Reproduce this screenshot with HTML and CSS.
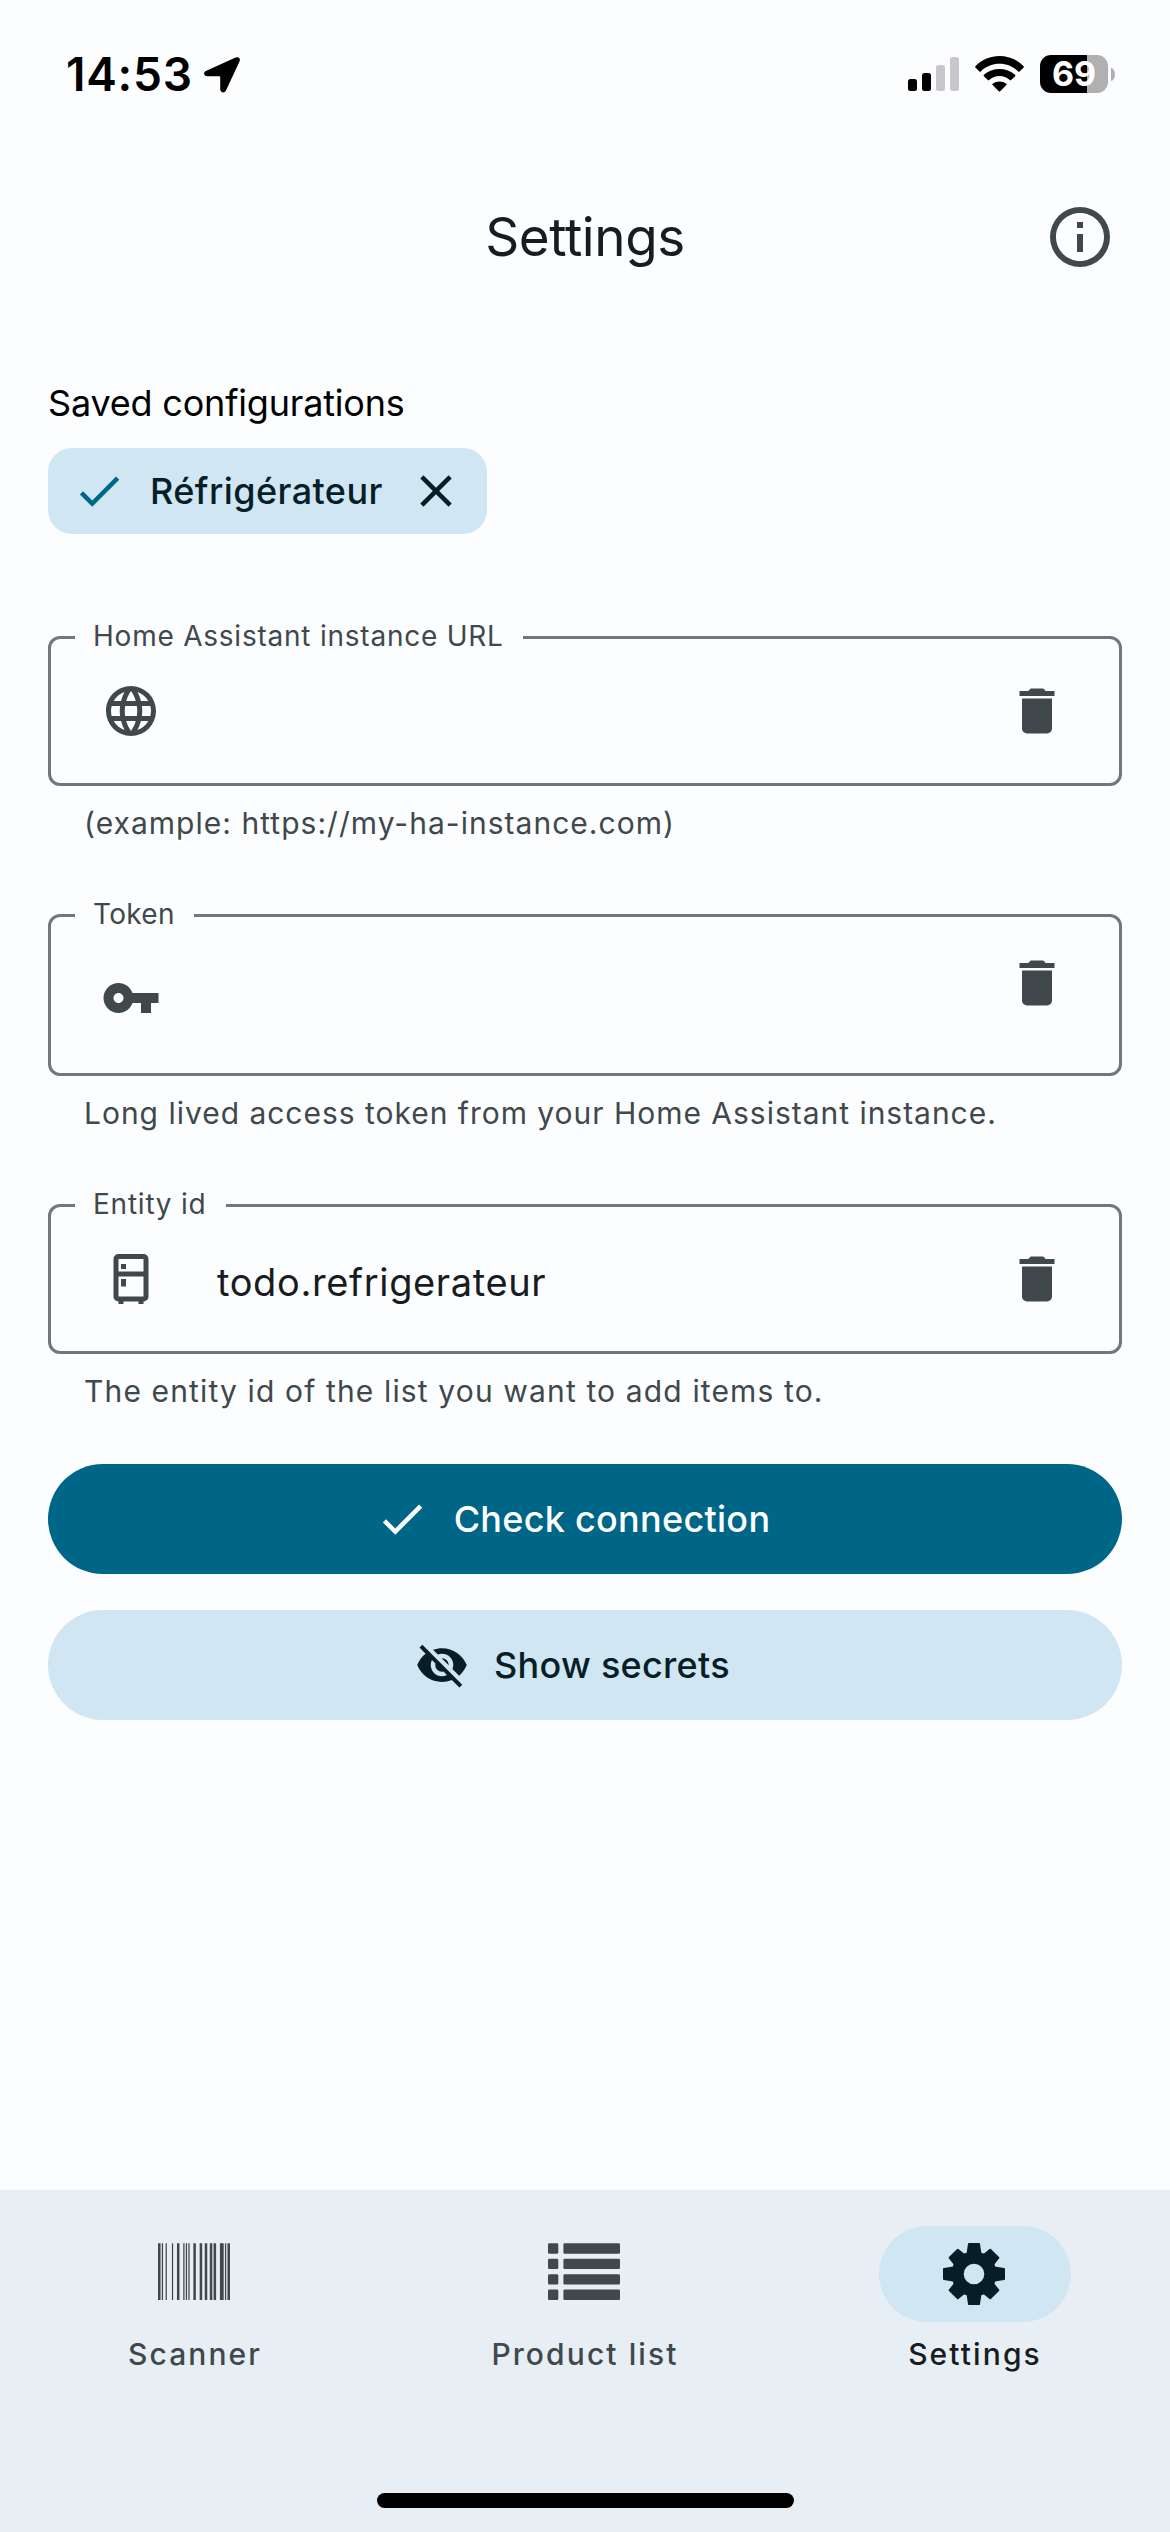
FILE: index.html
```html
<!DOCTYPE html>
<html lang="en">
<head>
<meta charset="utf-8">
<title>Settings</title>
<link rel="stylesheet" href="styles.css">
</head>
<body>
<svg class="defs" width="0" height="0" aria-hidden="true">
  <symbol id="check" viewBox="0 0 24 24"><path d="M21,7L9,19L3.5,13.5L4.91,12.09L9,16.17L19.59,5.59L21,7Z"/></symbol>
  <symbol id="delete" viewBox="0 0 24 24"><path d="M19,4H15.5L14.5,3H9.5L8.5,4H5V6H19M6,19A2,2 0 0,0 8,21H16A2,2 0 0,0 18,19V7H6V19Z"/></symbol>
</svg>

<header class="status">
  <span class="status__time">14:53</span>
  <svg class="status__arrow" width="36" height="36" viewBox="0 0 36 36"><path d="M1.8 14L31.6 .6Q33.6 -.2 35 .8Q36.3 2 35.6 4.2L22 33.5Q20.8 35.8 18.4 35.5Q16.2 35 16.2 32.3V20.3Q16.2 19.3 15.2 19.3H3.4Q.6 19.3 .1 17.2Q-.2 15 1.8 14Z"/></svg>
  <div class="status__right">
    <svg width="51" height="34" viewBox="0 0 51 34">
      <rect y="22" width="9" height="12" rx="2.5"/><rect x="14" y="16" width="9" height="18" rx="2.5"/>
      <g fill="#c8c8cc"><rect x="28" y="8" width="9" height="26" rx="2.5"/><rect x="42" width="9" height="34" rx="2.5"/></g>
    </svg>
    <svg width="49" height="36" viewBox="0 0 49 36">
      <path d="M.4 11.6Q-.2 10.8 .4 10.2C13.6 -3.4 35.4 -3.4 48.6 10.2Q49.2 10.8 48.6 11.6L44.6 15.5Q43.9 16.1 43.2 15.5C32.8 5.3 16.2 5.3 5.8 15.5Q5.1 16.1 4.4 15.5Z"/>
      <path d="M8.9 20.2Q8.2 19.5 8.9 18.8C17.6 10.9 31.4 10.9 40.1 18.8Q40.8 19.5 40.1 20.2L36.2 24.1Q35.5 24.7 34.8 24.1C28.9 18.6 20.1 18.6 14.2 24.1Q13.5 24.7 12.8 24.1Z"/>
      <path d="M17.6 29Q16.9 28.3 17.7 27.7C21.6 24.6 27.4 24.6 31.3 27.7Q32.1 28.3 31.4 29L25.2 35.3Q24.5 35.9 23.8 35.3Z"/>
    </svg>
    <div class="battery"><span class="battery__body">69</span><span class="battery__cap"></span></div>
  </div>
</header>

<div class="appbar">
  <h1 class="appbar__title">Settings</h1>
  <svg class="appbar__info" width="72" height="72" viewBox="0 0 24 24"><path d="M11,9H13V7H11M12,20C7.59,20 4,16.41 4,12C4,7.59 7.59,4 12,4C16.41,4 20,7.59 20,12C20,16.41 16.41,20 12,20M12,2A10,10 0 0,0 2,12A10,10 0 0,0 12,22A10,10 0 0,0 22,12A10,10 0 0,0 12,2M11,17H13V11H11V17Z"/></svg>
</div>

<main class="content">
  <h2 class="saved">Saved configurations</h2>
  <div class="chip">
    <svg class="chip__check" width="54" height="54"><use href="#check"/></svg>
    <span class="chip__label">Réfrigérateur</span>
    <svg width="54" height="54" viewBox="0 0 24 24"><path d="M19,6.41L17.59,5L12,10.59L6.41,5L5,6.41L10.59,12L5,17.59L6.41,19L12,13.41L17.59,19L19,17.59L13.41,12L19,6.41Z"/></svg>
  </div>

  <fieldset class="field">
    <legend class="field__label">Home Assistant instance URL</legend>
    <svg class="icon" width="60" height="60" viewBox="0 0 24 24"><path d="M16.36,14C16.44,13.34 16.5,12.68 16.5,12C16.5,11.32 16.44,10.66 16.36,10H19.74C19.9,10.64 20,11.31 20,12C20,12.69 19.9,13.36 19.74,14M14.59,19.56C15.19,18.45 15.65,17.25 15.97,16H18.92C17.96,17.65 16.43,18.93 14.59,19.56M14.34,14H9.66C9.56,13.34 9.5,12.68 9.5,12C9.5,11.32 9.56,10.65 9.66,10H14.34C14.43,10.65 14.5,11.32 14.5,12C14.5,12.68 14.43,13.34 14.34,14M12,19.96C11.17,18.76 10.5,17.43 10.09,16H13.91C13.5,17.43 12.83,18.76 12,19.96M8,8H5.08C6.03,6.34 7.57,5.06 9.4,4.44C8.8,5.55 8.35,6.75 8,8M5.08,16H8C8.35,17.25 8.8,18.45 9.4,19.56C7.57,18.93 6.03,17.65 5.08,16M4.26,14C4.1,13.36 4,12.69 4,12C4,11.31 4.1,10.64 4.26,10H7.64C7.56,10.66 7.5,11.32 7.5,12C7.5,12.68 7.56,13.34 7.64,14M12,4.03C12.83,5.23 13.5,6.57 13.91,8H10.09C10.5,6.57 11.17,5.23 12,4.03M18.92,8H15.97C15.65,6.75 15.19,5.55 14.59,4.44C16.43,5.07 17.96,6.34 18.92,8M12,2C6.47,2 2,6.5 2,12A10,10 0 0,0 12,22A10,10 0 0,0 22,12A10,10 0 0,0 12,2Z"/></svg>
    <span class="field__value"></span>
    <svg class="icon" width="60" height="60"><use href="#delete"/></svg>
  </fieldset>
  <p class="helper">(example: https://my-ha-instance.com)</p>

  <fieldset class="field field--token">
    <legend class="field__label">Token</legend>
    <svg class="icon icon--key" width="60" height="60" viewBox="0 0 24 24"><path d="M7 14C5.9 14 5 13.1 5 12S5.9 10 7 10 9 10.9 9 12 8.1 14 7 14M12.6 10C11.8 7.7 9.6 6 7 6C3.7 6 1 8.7 1 12S3.7 18 7 18C9.6 18 11.8 16.3 12.6 14H16V18H20V14H23V10H12.6Z"/></svg>
    <span class="field__value"></span>
    <svg class="icon" width="60" height="60"><use href="#delete"/></svg>
  </fieldset>
  <p class="helper helper--token">Long lived access token from your Home Assistant instance.</p>

  <fieldset class="field">
    <legend class="field__label">Entity id</legend>
    <svg class="icon" width="60" height="60" viewBox="0 0 24 24"><path d="M9,21V22H7V21A2,2 0 0,1 5,19V4A2,2 0 0,1 7,2H17A2,2 0 0,1 19,4V19A2,2 0 0,1 17,21V22H15V21H9M7,4V9H17V4H7M7,19H17V11H7V19M8,12H10V15H8V12M8,6H10V8H8V6Z"/></svg>
    <span class="field__value">todo.refrigerateur</span>
    <svg class="icon" width="60" height="60"><use href="#delete"/></svg>
  </fieldset>
  <p class="helper helper--entity">The entity id of the list you want to add items to.</p>

  <div class="actions">
    <button class="button button--primary"><svg width="54" height="54"><use href="#check"/></svg>Check connection</button>
    <button class="button button--tonal"><svg width="54" height="54" viewBox="0 0 24 24"><path d="M11.83,9L15,12.16C15,12.11 15,12.05 15,12A3,3 0 0,0 12,9C11.94,9 11.89,9 11.83,9M7.53,9.8L9.08,11.35C9.03,11.56 9,11.77 9,12A3,3 0 0,0 12,15C12.22,15 12.44,14.97 12.65,14.92L14.2,16.47C13.53,16.8 12.79,17 12,17A5,5 0 0,1 7,12C7,11.21 7.2,10.47 7.53,9.8M2,4.27L4.28,6.55L4.73,7C3.08,8.3 1.78,10 1,12C2.73,16.39 7,19.5 12,19.5C13.55,19.5 15.03,19.2 16.38,18.66L16.81,19.08L19.73,22L21,20.73L3.27,3M12,7A5,5 0 0,1 17,12C17,12.64 16.87,13.26 16.64,13.82L19.57,16.75C21.07,15.5 22.27,13.86 23,12C21.27,7.61 17,4.5 12,4.5C10.6,4.5 9.26,4.75 8,5.2L10.17,7.35C10.74,7.13 11.35,7 12,7Z"/></svg>Show secrets</button>
  </div>
</main>

<footer class="bottom">
  <nav class="tabs">
    <a class="tab">
      <span class="tab__pill"><svg width="72" height="62" viewBox="0 0 1792 1543"><path d="M0 64H63V1472H0ZM94 64H126V1472H94ZM189 64H220V1472H189ZM346 64H377V1472H346ZM472 64H534V1472H472ZM629 64H660V1472H629ZM692 64H723V1472H692ZM755 64H786V1472H755ZM880 64H943V1472H880ZM1037 64H1100V1472H1037ZM1163 64H1226V1472H1163ZM1289 64H1352V1472H1289ZM1383 64H1446V1472H1383ZM1541 64H1635V1472H1541ZM1666 64H1698V1472H1666ZM1729 64H1792V1472H1729Z" transform="translate(0 -55)"/></svg></span>
      <span class="tab__label">Scanner</span>
    </a>
    <a class="tab">
      <span class="tab__pill"><svg width="72" height="62" viewBox="0 0 72 62"><g id="row"><rect y=".3" width="10.3" height="10.4" rx="1.3"/><rect x="15.4" y=".3" width="56.6" height="10.4" rx="1.3"/></g><use href="#row" y="15.4"/><use href="#row" y="30.9"/><use href="#row" y="46.3"/></svg></span>
      <span class="tab__label">Product list</span>
    </a>
    <a class="tab tab--active">
      <span class="tab__pill"><svg width="62" height="62" viewBox="-31 -31 62 62"><path fill-rule="evenodd" stroke="#081e27" stroke-width="2" stroke-linejoin="round" d="M-5-30H5L6.4-20.6L10-19.3L16.2-24.3L24.3-16.2L19.3-10L20.6-6.4L30-5V5L20.6 6.4L19.3 10L24.3 16.2L16.2 24.3L10 19.3L6.4 20.6L5 30H-5L-6.4 20.6L-10 19.3L-16.2 24.3L-24.3 16.2L-19.3 10L-20.6 6.4L-30 5V-5L-20.6-6.4L-19.3-10L-24.3-16.2L-16.2-24.3L-10-19.3L-6.4-20.6ZM0-11.3A11.3 11.3 0 1 0 0 11.3A11.3 11.3 0 1 0 0-11.3Z"/></svg></span>
      <span class="tab__label">Settings</span>
    </a>
  </nav>
  <div class="home-indicator"></div>
</footer>
</body>
</html>
```
FILE: styles.css
```css
* { box-sizing: border-box; }

body {
  display: flex;
  flex-direction: column;
  width: 1170px;
  height: 2532px;
  margin: 0;
  background: #fbfdff;
  color: #191c1e;
  font-family: Inter, "Liberation Sans", sans-serif;
}

h1, h2, p { margin: 0; font-weight: 400; }
svg { display: block; flex: none; fill: currentColor; }
.defs { position: absolute; }

/* Status bar */
.status {
  display: flex;
  align-items: center;
  height: 148px;
  padding: 0 55px 0 66px;
  color: #000;
}
.status__time { width: 138px; font-size: 46px; font-weight: 600; letter-spacing: .75px; line-height: 56px; }
.status__arrow { margin-top: 2px; }
.status__right { display: flex; align-items: center; gap: 16px; margin-left: auto; }
.battery { display: flex; align-items: center; gap: 3px; }
.battery__body {
  width: 68px;
  height: 38px;
  border-radius: 11px;
  background: linear-gradient(90deg, #000 47px, #b0b0b2 47px);
  color: #fff;
  font-size: 34px;
  font-weight: 700;
  line-height: 38px;
  text-align: center;
}
.battery__cap { width: 4px; height: 13px; border-radius: 0 4px 4px 0 / 0 6.5px 6.5px 0; background: #b0b0b2; }

/* App bar */
.appbar {
  display: grid;
  grid-template-columns: 1fr auto 1fr;
  align-items: center;
  height: 178px;
  padding: 0 54px;
}
.appbar__title { grid-column: 2; font-size: 53px; letter-spacing: -.4px; line-height: 64px; }
.appbar__info { justify-self: end; color: #40484c; }

/* Content */
.content { flex: 1; padding: 55px 48px 0; }
.saved { color: #000; font-size: 36px; letter-spacing: -.19px; line-height: 44px; }
.chip {
  display: flex;
  align-items: center;
  gap: 24px;
  width: max-content;
  height: 86px;
  margin: 23px 0 87px;
  padding: 0 24px;
  border-radius: 24px;
  background: #d0e6f3;
  color: #081e27;
}
.chip__check { color: #006687; }
.chip__label { width: 235px; font-size: 36px; font-weight: 500; letter-spacing: .42px; white-space: nowrap; }

.field {
  display: flex;
  align-items: flex-start;
  min-width: 0;
  height: 165px;
  margin: 0;
  padding: 27px 52px 0 50px;
  border: 3px solid #70787d;
  border-radius: 12px;
}
.field--token { height: 177px; padding-top: 21px; }
.field__label {
  height: 33px;
  margin-left: -26px;
  padding: 0 19px 0 18px;
  color: #40484c;
  font-size: 28px;
  letter-spacing: .77px;
  line-height: 30px;
}
.field--token .field__label { letter-spacing: .3px; }
.field__value { flex: 1; padding-left: 56px; font-size: 38px; letter-spacing: .63px; line-height: 66px; }
.icon { color: #40484c; }
.icon--key { margin-top: 15px; }

.helper { margin: 17px 0 56px; padding-left: 36px; color: #40484c; font-size: 30px; letter-spacing: 1.03px; line-height: 40px; }
.helper--token { letter-spacing: .98px; }
.helper--entity { letter-spacing: 1.14px; }

.actions { display: flex; flex-direction: column; gap: 36px; margin-top: -3px; }
.button {
  display: flex;
  align-items: center;
  justify-content: center;
  gap: 25px;
  height: 110px;
  padding: 0 25px 0 0;
  border: 0;
  border-radius: 55px;
  font: 500 36px/44px Inter, "Liberation Sans", sans-serif;
  letter-spacing: .28px;
}
.button--primary { background: #006687; color: #fff; }
.button--tonal { background: #d0e6f3; color: #081e27; }

/* Bottom navigation */
.bottom {
  display: flex;
  flex-direction: column;
  align-items: center;
  height: 342px;
  padding: 36px 0 24px;
  background: #e7eff5;
}
.tabs { display: flex; width: 100%; }
.tab { flex: 1; display: flex; flex-direction: column; align-items: center; gap: 12px; color: #40484c; }
.tab__pill {
  display: flex;
  align-items: center;
  justify-content: center;
  width: 192px;
  height: 96px;
  padding-right: 2px;
  border-radius: 48px;
}
.tab__label { font-size: 30px; font-weight: 500; letter-spacing: 2.1px; line-height: 40px; }
.tab--active .tab__pill { background: #d0e6f3; color: #081e27; }
.tab--active .tab__label { color: #191c1e; }
.home-indicator { width: 417px; height: 15px; margin-top: auto; border-radius: 8px; background: #000; }
```
